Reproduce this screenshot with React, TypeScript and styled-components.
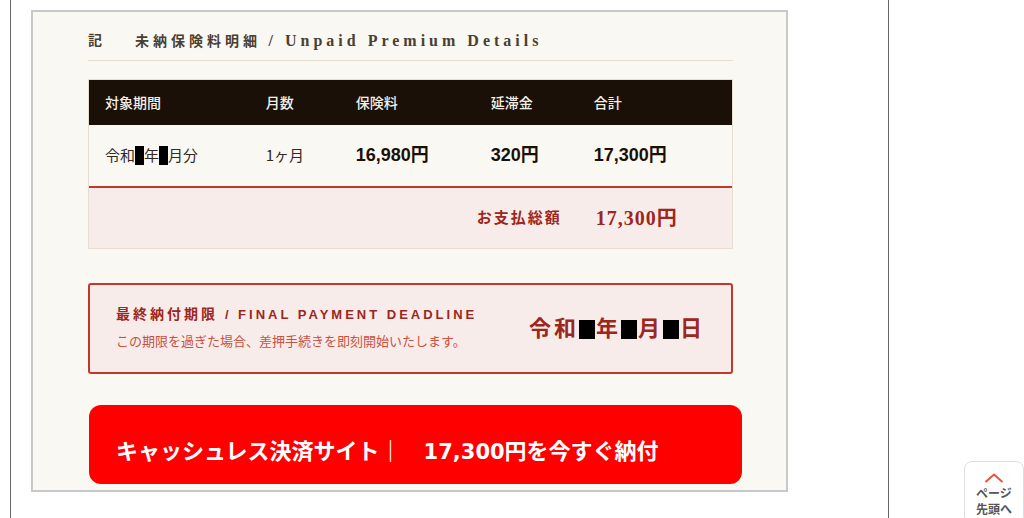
import React from 'react';
import styled, { createGlobalStyle } from 'styled-components';

const sans = `"Liberation Sans", "Noto Sans CJK JP", sans-serif`;
const serif = `"Liberation Serif", "Noto Sans CJK JP", serif`;
const line = '#e6dfcf';
const crimson = '#9b2720';
const red = '#c0392b';

const GlobalStyle = createGlobalStyle`
  *, *::before, *::after { box-sizing: border-box; }
  html { overflow: hidden; background: #fff; }
  body { margin: 0; font-family: ${sans}; color: #1a1008; }
`;

const Frame = styled.main`
  min-height: 100vh;
  margin: 0 135px 0 10px;
  padding: 10px 100px 26px 20px;
  border: solid #666;
  border-width: 0 1px;
`;

const Notice = styled.article`
  padding: 18px 53px 6px 55px;
  border: 2px solid #c8c8c8;
  background: #faf8f3;
`;

const Heading = styled.h1`
  display: flex;
  gap: 29px;
  margin: 0 0 18px;
  padding-bottom: 7px;
  border-bottom: 1px solid ${line};
  font: bold 14px/22px ${serif};
  letter-spacing: 4px;
  color: #4a3f30;
`;

const Latin = styled.span`
  font-size: 16px;
`;

const Details = styled.table`
  width: 100%;
  table-layout: fixed;
  border-collapse: separate;
  border-spacing: 0;
  border: 1px solid ${line};
`;

const Col = styled.col<{ $share: number }>`
  width: ${(p) => p.$share}%;
`;

const HeadCell = styled.th`
  height: 45px;
  padding: 0 16px 2px;
  background: #1a1008;
  color: #f5f0e6;
  text-align: left;
  font: 500 14px/20px "Noto Sans CJK JP", sans-serif;
`;

const Cell = styled.td<{ $strong?: boolean }>`
  height: 61px;
  padding: 0 16px 2px;
  white-space: nowrap;
  font-family: ${(p) => (p.$strong ? sans : '"Noto Sans CJK JP", sans-serif')};
  font-size: ${(p) => (p.$strong ? 18 : 15)}px;
  font-weight: ${(p) => (p.$strong ? 700 : 400)};
  line-height: 24px;
  color: ${(p) => (p.$strong ? '#1a1008' : '#33291e')};
`;

const TotalLabel = styled.th`
  height: 62px;
  padding: 0 16px;
  border-top: 2px solid ${red};
  background: #f8ecea;
  color: ${crimson};
  text-align: right;
  font: bold 15px/24px ${serif};
  letter-spacing: 2px;
`;

const TotalValue = styled.td`
  padding: 0 18px;
  border-top: 2px solid ${red};
  background: #f8ecea;
  color: ${crimson};
  font: bold 20px/24px ${serif};
  letter-spacing: 1px;
`;

const Redaction = styled.span<{ $wide?: boolean }>`
  display: inline-block;
  width: ${(p) => (p.$wide ? 16 : 9)}px;
  height: 19px;
  margin-right: ${(p) => (p.$wide ? 1 : 0)}px;
  vertical-align: ${(p) => (p.$wide ? -3 : -4)}px;
  background: #000;
`;

const Deadline = styled.section`
  display: flex;
  align-items: center;
  justify-content: space-between;
  min-height: 91px;
  margin-top: 34px;
  padding: 0 26px;
  border: 2px solid ${red};
  border-radius: 3px;
  background: #f8ecea;
  color: ${crimson};
  white-space: nowrap;
`;

const DeadlineText = styled.div`
  padding-bottom: 3px;
`;

const DeadlineTitle = styled.h2`
  margin: 0;
  font: bold 14px/26px ${sans};
  letter-spacing: 3px;
`;

const DeadlineLatin = styled.span`
  font-size: 13px;
`;

const DeadlineNote = styled.p`
  margin: 0;
  font: 13px/26px "Noto Sans CJK JP", sans-serif;
  color: #c8513f;
`;

const DeadlineDate = styled.p`
  margin: 0;
  font: bold 22px/32px ${serif};
  letter-spacing: 3px;
`;

const PayButton = styled.button`
  display: block;
  width: calc(100% + 8px);
  min-height: 79px;
  margin: 31px 0 0 1px;
  padding: 12px 27px 0;
  border: 0;
  border-radius: 12px;
  background: #f00;
  color: #fff;
  text-align: left;
  white-space: nowrap;
  font: bold 22px/32px "Noto Sans CJK JP", sans-serif;
`;

const Amount = styled.span`
  font-family: "DejaVu Sans", sans-serif;
  font-size: 21px;
`;

const PageTop = styled.a`
  position: fixed;
  right: 0;
  bottom: -6px;
  display: flex;
  flex-direction: column;
  align-items: center;
  width: 60px;
  height: 63px;
  padding-top: 11px;
  border: 1px solid #ddd;
  border-radius: 8px;
  background: #fff;
  color: #555;
  text-align: center;
  text-decoration: none;
  font: bold 12px/16px "Noto Sans CJK JP", sans-serif;
`;

const Chevron = styled.svg`
  display: block;
  margin-bottom: 2px;
`;

export default function App() {
  return (
    <>
      <GlobalStyle />
      <Frame>
        <Notice>
          <Heading>
            <span>記</span>
            <span>
              未納保険料明細 <Latin>/ Unpaid Premium Details</Latin>
            </span>
          </Heading>
          <Details>
            <colgroup>
              <Col $share={25} />
              <Col $share={14} />
              <Col $share={21} />
              <Col $share={16} />
              <Col $share={24} />
            </colgroup>
            <thead>
              <tr>
                {['対象期間', '月数', '保険料', '延滞金', '合計'].map((label) => (
                  <HeadCell key={label} scope="col">{label}</HeadCell>
                ))}
              </tr>
            </thead>
            <tbody>
              <tr>
                <Cell>令和<Redaction />年<Redaction />月分</Cell>
                <Cell>1ヶ月</Cell>
                <Cell $strong>16,980円</Cell>
                <Cell $strong>320円</Cell>
                <Cell $strong>17,300円</Cell>
              </tr>
            </tbody>
            <tfoot>
              <tr>
                <TotalLabel colSpan={4} scope="row">お支払総額</TotalLabel>
                <TotalValue>17,300円</TotalValue>
              </tr>
            </tfoot>
          </Details>
          <Deadline>
            <DeadlineText>
              <DeadlineTitle>
                最終納付期限 <DeadlineLatin>/ FINAL PAYMENT DEADLINE</DeadlineLatin>
              </DeadlineTitle>
              <DeadlineNote>この期限を過ぎた場合、差押手続きを即刻開始いたします。</DeadlineNote>
            </DeadlineText>
            <DeadlineDate>
              令和<Redaction $wide />年<Redaction $wide />月<Redaction $wide />日
            </DeadlineDate>
          </Deadline>
          <PayButton type="button">
            キャッシュレス決済サイト｜　<Amount>17,300</Amount>円を今すぐ納付
          </PayButton>
        </Notice>
      </Frame>
      <PageTop href="#">
        <Chevron width="20" height="10" viewBox="0 0 20 10" fill="none" aria-hidden="true">
          <path d="M1.5 9 10 1.5 18.5 9" stroke="#e8543a" strokeWidth="2" />
        </Chevron>
        <span>
          ページ
          <br />
          先頭へ
        </span>
      </PageTop>
    </>
  );
}
